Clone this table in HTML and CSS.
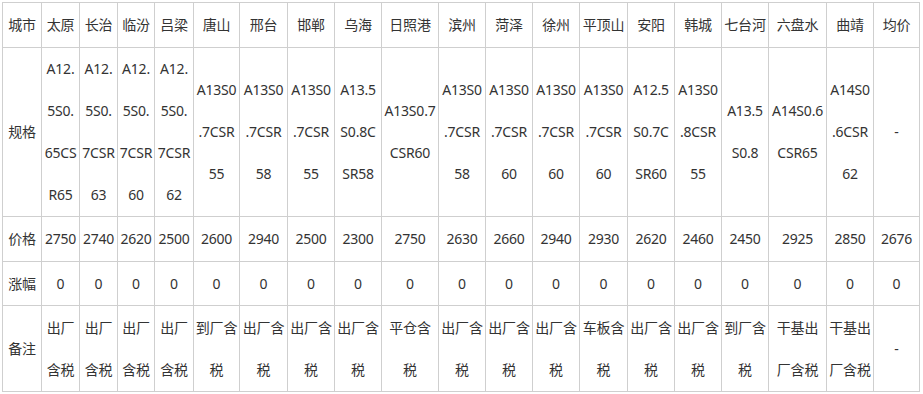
FILE: index.html
```html
<!DOCTYPE html>
<html lang="zh-CN">
<head>
<meta charset="utf-8">
<title>价格表</title>
<link rel="stylesheet" href="styles.css">
</head>
<body>
<table class="price-table">
  <colgroup>
    <col class="w39"><col class="w38"><col class="w38"><col class="w37"><col class="w39">
    <col class="w46"><col class="w48"><col class="w47"><col class="w47"><col class="w57">
    <col class="w47"><col class="w47"><col class="w47"><col class="w48"><col class="w47">
    <col class="w47"><col class="w47"><col class="w58"><col class="w47"><col class="w46">
  </colgroup>
  <tbody>
    <tr class="row-head">
      <td>城市</td><td>太原</td><td>长治</td><td>临汾</td><td>吕梁</td><td>唐山</td><td>邢台</td><td>邯郸</td><td>乌海</td><td>日照港</td><td>滨州</td><td>菏泽</td><td>徐州</td><td>平顶山</td><td>安阳</td><td>韩城</td><td>七台河</td><td>六盘水</td><td>曲靖</td><td>均价</td>
    </tr>
    <tr class="row-spec">
      <td>规格</td>
      <td>A12.<br>5S0.<br>65CS<br>R65</td>
      <td>A12.<br>5S0.<br>7CSR<br>63</td>
      <td>A12.<br>5S0.<br>7CSR<br>60</td>
      <td>A12.<br>5S0.<br>7CSR<br>62</td>
      <td>A13S0<br>.7CSR<br>55</td>
      <td>A13S0<br>.7CSR<br>58</td>
      <td>A13S0<br>.7CSR<br>55</td>
      <td>A13.5<br>S0.8C<br>SR58</td>
      <td>A13S0.7<br>CSR60</td>
      <td>A13S0<br>.7CSR<br>58</td>
      <td>A13S0<br>.7CSR<br>60</td>
      <td>A13S0<br>.7CSR<br>60</td>
      <td>A13S0<br>.7CSR<br>60</td>
      <td>A12.5<br>S0.7C<br>SR60</td>
      <td>A13S0<br>.8CSR<br>55</td>
      <td>A13.5<br>S0.8</td>
      <td>A14S0.6<br>CSR65</td>
      <td>A14S0<br>.6CSR<br>62</td>
      <td>-</td>
    </tr>
    <tr class="row-price">
      <td>价格</td><td>2750</td><td>2740</td><td>2620</td><td>2500</td><td>2600</td><td>2940</td><td>2500</td><td>2300</td><td>2750</td><td>2630</td><td>2660</td><td>2940</td><td>2930</td><td>2620</td><td>2460</td><td>2450</td><td>2925</td><td>2850</td><td>2676</td>
    </tr>
    <tr class="row-change">
      <td>涨幅</td><td>0</td><td>0</td><td>0</td><td>0</td><td>0</td><td>0</td><td>0</td><td>0</td><td>0</td><td>0</td><td>0</td><td>0</td><td>0</td><td>0</td><td>0</td><td>0</td><td>0</td><td>0</td><td>0</td>
    </tr>
    <tr class="row-note">
      <td>备注</td>
      <td>出厂<br>含税</td>
      <td>出厂<br>含税</td>
      <td>出厂<br>含税</td>
      <td>出厂<br>含税</td>
      <td>到厂含<br>税</td>
      <td>出厂含<br>税</td>
      <td>出厂含<br>税</td>
      <td>出厂含<br>税</td>
      <td>平仓含<br>税</td>
      <td>出厂含<br>税</td>
      <td>出厂含<br>税</td>
      <td>出厂含<br>税</td>
      <td>车板含<br>税</td>
      <td>出厂含<br>税</td>
      <td>出厂含<br>税</td>
      <td>到厂含<br>税</td>
      <td>干基出<br>厂含税</td>
      <td>干基出<br>厂含税</td>
      <td>-</td>
    </tr>
  </tbody>
</table>
</body>
</html>
```

FILE: styles.css
```css
html, body {
  margin: 0;
  padding: 0;
  background: #ffffff;
}

body {
  padding: 2px 0 0 2px;
  font-family: "Noto Sans", "Noto Sans CJK SC", sans-serif;
  font-size: 14px;
  color: #333333;
}

.price-table {
  border-collapse: collapse;
  table-layout: fixed;
  width: 918px;
}

.price-table td {
  border: 1px solid #cfcfcf;
  padding: 0;
  text-align: center;
  vertical-align: middle;
  line-height: 42px;
  white-space: nowrap;
  overflow: visible;
  letter-spacing: -0.2px;
}

.row-head td { height: 44px; }
.row-spec td { height: 168px; }
.row-price td { height: 44px; }
.row-change td { height: 43px; }
.row-note td { height: 85px; }

.w37 { width: 37px; }
.w38 { width: 38px; }
.w39 { width: 39px; }
.w46 { width: 46px; }
.w47 { width: 47px; }
.w48 { width: 48px; }
.w57 { width: 57px; }
.w58 { width: 58px; }
```
